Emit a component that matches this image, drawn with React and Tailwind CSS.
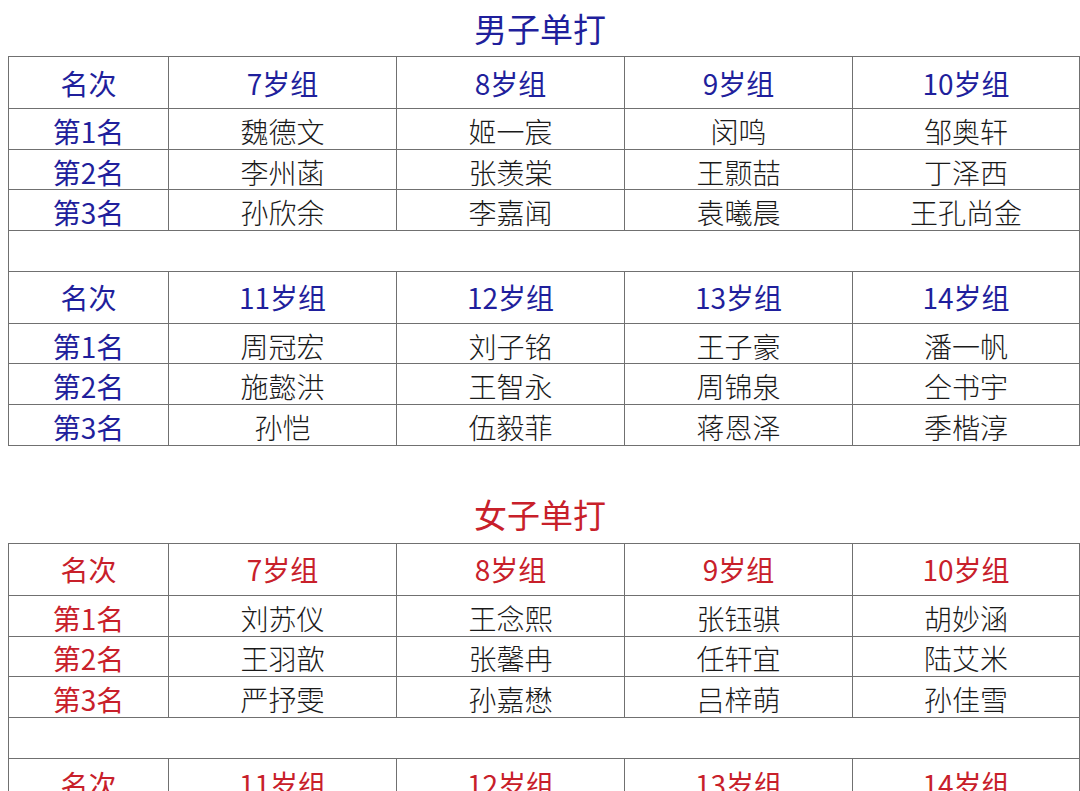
const boys = {
  title: "男子单打",
  groups: [
    {
      ages: ["7岁组", "8岁组", "9岁组", "10岁组"],
      rows: [
        ["魏德文", "姬一宸", "闵鸣", "邹奥轩"],
        ["李州菡", "张羡棠", "王颢喆", "丁泽西"],
        ["孙欣余", "李嘉闻", "袁曦晨", "王孔尚金"],
      ],
    },
    {
      ages: ["11岁组", "12岁组", "13岁组", "14岁组"],
      rows: [
        ["周冠宏", "刘子铭", "王子豪", "潘一帆"],
        ["施懿洪", "王智永", "周锦泉", "仝书宇"],
        ["孙恺", "伍毅菲", "蒋恩泽", "季楷淳"],
      ],
    },
  ],
};

const girls = {
  title: "女子单打",
  groups: [
    {
      ages: ["7岁组", "8岁组", "9岁组", "10岁组"],
      rows: [
        ["刘苏仪", "王念熙", "张钰骐", "胡妙涵"],
        ["王羽歆", "张馨冉", "任轩宜", "陆艾米"],
        ["严抒雯", "孙嘉懋", "吕梓萌", "孙佳雪"],
      ],
    },
    {
      ages: ["11岁组", "12岁组", "13岁组", "14岁组"],
      rows: [
        ["", "", "", ""],
        ["", "", "", ""],
        ["", "", "", ""],
      ],
    },
  ],
};

const cell = "border border-[#707070] text-center p-0";

function Section({ data, color, className }) {
  return (
    <section className={className}>
      <div className="h-[56px] flex items-center justify-center">
        <h2 className={`text-[33px] font-normal leading-none ${color}`}>{data.title}</h2>
      </div>
      <table className="ml-2 w-[1071px] border-collapse table-fixed">
        <colgroup>
          <col className="w-[160px]" />
          <col className="w-[228px]" />
          <col className="w-[228px]" />
          <col className="w-[228px]" />
          <col className="w-[227px]" />
        </colgroup>
        <tbody>
          {data.groups.map((g, gi) => (
            <Group key={gi} group={g} color={color} spacer={gi > 0} />
          ))}
        </tbody>
      </table>
    </section>
  );
}

function Group({ group, color, spacer }) {
  return (
    <>
      {spacer && (
        <tr className="h-[40.7px]">
          <td colSpan={5} className={cell}></td>
        </tr>
      )}
      <tr className="h-[52px]">
        <td className={`${cell} ${color} text-[28px]`}>名次</td>
        {group.ages.map((a) => (
          <td key={a} className={`${cell} ${color} text-[28px]`}>
            {a}
          </td>
        ))}
      </tr>
      {group.rows.map((r, i) => (
        <tr key={i} className="h-[40.7px]">
          <td className={`${cell} ${color} text-[28px] font-normal leading-none pt-1`}>
            第{i + 1}名
          </td>
          {r.map((name, j) => (
            <td key={j} className={`${cell} text-[28px] font-light text-[#1a1a1a] leading-none pt-1`}>
              {name}
            </td>
          ))}
        </tr>
      ))}
    </>
  );
}

export default function App() {
  return (
    <div
      className="w-[1080px] h-[791px] overflow-hidden bg-white"
      style={{ fontFamily: '"Noto Sans CJK SC", "Noto Sans", sans-serif' }}
    >
      <Section data={boys} color="text-[#1f1f9c]" />
      <Section data={girls} color="text-[#c8202a]" className="mt-[41px]" />
    </div>
  );
}
